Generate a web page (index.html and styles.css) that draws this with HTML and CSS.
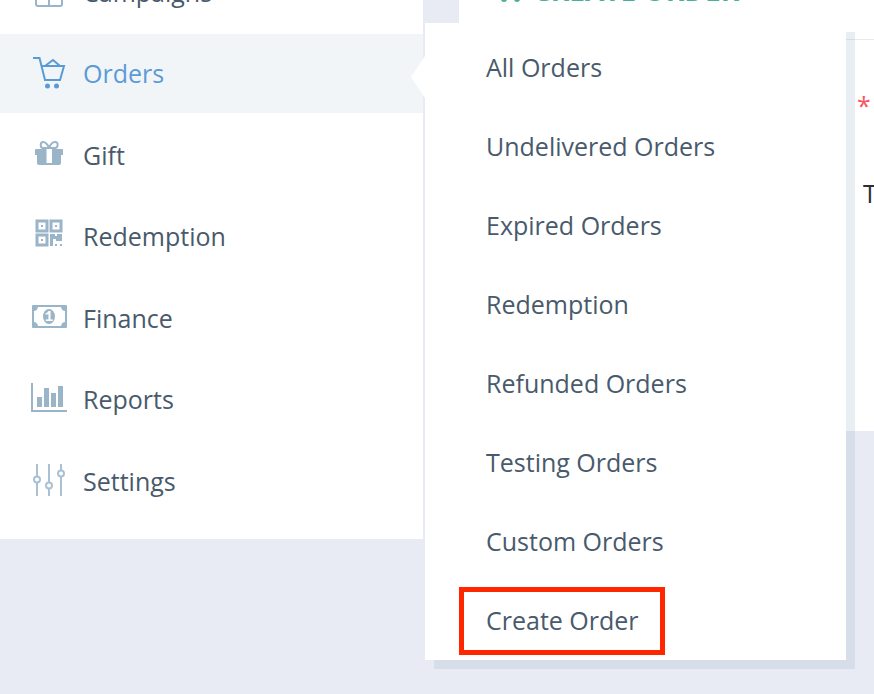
FILE: index.html
```html
<!DOCTYPE html>
<html lang="en">
<head>
  <meta charset="UTF-8" />
  <meta name="viewport" content="width=device-width, initial-scale=1.0" />
  <title>Create Order</title>
  <link rel="stylesheet" href="styles.css">
</head>
<body>

  <nav class="sidebar">
    <ul class="menu">
      <li class="menu-item">
        <a href="#" class="menu-link">
          <svg class="icon line" viewBox="0 0 40 39"><rect x="7" y="7" width="26" height="26" rx="2" /><path d="M20 7V33M7 16H33" /></svg>
          Campaigns
        </a>
      </li>
      <li class="menu-item active">
        <a href="#" class="menu-link">
          <svg class="icon line" viewBox="0 0 40 39"><path d="M4 4H10.500L16 26H31L35 12H13M16 12L24 6L31 12" /><circle class="solid" cx="18.500" cy="32" r="2.500" /><circle class="solid" cx="27.500" cy="32" r="2.500" /></svg>
          Orders
        </a>
        <ul class="submenu">
          <li><a href="#">All Orders</a></li>
          <li><a href="#">Undelivered Orders</a></li>
          <li><a href="#">Expired Orders</a></li>
          <li><a href="#">Redemption</a></li>
          <li><a href="#">Refunded Orders</a></li>
          <li><a href="#">Testing Orders</a></li>
          <li><a href="#">Custom Orders</a></li>
          <li><a href="#" class="marked">Create Order</a></li>
        </ul>
      </li>
      <li class="menu-item">
        <a href="#" class="menu-link">
          <svg class="icon" viewBox="0 0 40 39"><path fill-rule="evenodd" d="M7 13H33Q34 13 34 14V19H32V27Q32 29 30 29H10Q8 29 8 27V19H6V14Q6 13 7 13ZM17.500 13V27H23V13Z" /><g class="line"><path d="M20 12C18 7 16 6 14 6C11 6 11 12 14 12H20M20 12C22 7 24 6 26 6C30 6 29 12 26 12H20" /></g></svg>
          Gift
        </a>
      </li>
      <li class="menu-item">
        <a href="#" class="menu-link">
          <svg class="icon" viewBox="0 0 40 39"><g class="line thick"><rect x="8" y="4" width="10" height="10" /><rect x="22" y="4" width="10" height="10" /><rect x="8" y="18" width="10" height="10" /></g><path d="M12 8h2v2h-2zM26 8h2v2h-2zM12 22h2v2h-2zM21 17H26V19H28V17H33V24H27V22H24V29H21ZM26 27h2v2h-2zM31 27h2v2h-2z" /></svg>
          Redemption
        </a>
      </li>
      <li class="menu-item">
        <a href="#" class="menu-link">
          <svg class="icon" viewBox="0 0 40 39"><path fill-rule="evenodd" d="M4 6H37Q38 6 38 7V28Q38 29 37 29H4Q3 29 3 28V7Q3 6 4 6ZM9 8Q8 12 5 12V23Q8 23 9 27H32Q33 23 36 23V12Q33 12 32 8Z" /><ellipse cx="20" cy="17.500" rx="6" ry="7.500" /><text class="note-value" x="20" y="22" text-anchor="middle">1</text></svg>
          Finance
        </a>
      </li>
      <li class="menu-item">
        <a href="#" class="menu-link">
          <svg class="icon" viewBox="0 0 40 39"><path class="line" d="M3 3V31H38" /><path d="M8 17h5v10h-5zM15 8h5v19h-5zM22 13h5v14h-5zM29 6h5v21h-5z" /></svg>
          Reports
        </a>
      </li>
      <li class="menu-item">
        <a href="#" class="menu-link">
          <svg class="icon line light" viewBox="0 0 40 39"><path d="M8 2V14M8 21V34M20 2V20M20 27V34M32 2V8M32 15V34" /><circle cx="8" cy="17.500" r="3" /><circle cx="20" cy="23.500" r="3" /><circle cx="32" cy="11.500" r="3" /></svg>
          Settings
        </a>
      </li>
    </ul>
  </nav>

  <main class="content">
    <h1 class="title">
      <svg class="title-icon" viewBox="0 0 24 24"><circle cx="7" cy="21" r="2" /><circle cx="20" cy="21" r="2" /><path d="M0 2H4L8 15H20L23 6H6" /></svg>
      CREATE ORDER
    </h1>
    <div class="form">
      <span class="required">*</span>
      <span class="field-name">T</span>
    </div>
  </main>

</body>
</html>
```

FILE: styles.css
```css
*,
*::before,
*::after {
  box-sizing: border-box;
}

body {
  display: flex;
  align-items: flex-start;
  min-height: 100vh;
  margin: 0;
  overflow: hidden;
  background: #e8ebf4;
  color: #485a6b;
  font-family: "Open Sans", sans-serif;
  font-size: 25px;
}

ul {
  margin: 0;
  padding: 0;
  list-style: none;
}

a {
  color: inherit;
  text-decoration: none;
}

/* Sidebar, scrolled down past its first entries */
.sidebar {
  flex: 0 0 423px;
  margin-top: -47px;
  padding-bottom: 18px;
  background: #fff;
}

.menu-item {
  position: relative;
  margin-bottom: 2px;
}

.menu-item:nth-child(even) {
  margin-bottom: 3px;
}

.menu-item:last-child {
  margin-bottom: 0;
}

.menu-link {
  display: flex;
  align-items: center;
  gap: 14px;
  height: 79px;
  padding: 0 0 2px 29px;
}

.active .menu-link {
  background: #f2f5f8;
  color: #5a9bd5;
}

.active .menu-link::after {
  content: "";
  position: absolute;
  top: 22px;
  right: -2px;
  z-index: 3;
  border: 21px solid transparent;
  border-right: 14px solid #fff;
  border-left: 0;
}

.icon {
  width: 40px;
  height: 39px;
  margin-top: 2px;
  color: #9ab4c8;
  fill: currentColor;
}

.icon.light {
  color: #a9c1d2;
}

.active .icon {
  color: #5a9bd5;
}

.line {
  fill: none;
  stroke: currentColor;
  stroke-width: 2;
}

.thick {
  stroke-width: 3;
}

.solid {
  fill: currentColor;
  stroke: none;
}

.note-value {
  fill: #fff;
  font: bold 14px "Liberation Mono", monospace;
}

/* Fly-out menu */
.submenu {
  position: absolute;
  top: -11px;
  left: calc(100% + 2px);
  z-index: 2;
  width: 421px;
  padding-top: 5px;
  background: #fff;
  box-shadow: 9px 9px rgba(144, 172, 196, 0.2);
}

.submenu a {
  display: flex;
  align-items: center;
  height: 79px;
  padding: 0 0 2px 61px;
}

.submenu li {
  position: relative;
}

.marked::after {
  content: "";
  position: absolute;
  top: 6px;
  bottom: 5px;
  left: 34px;
  width: 206px;
  border: 5px solid #ff2600;
}

/* Page behind the menu */
.content {
  flex: 1;
  min-width: 0;
  height: 431px;
  margin-left: 36px;
  overflow: hidden;
  background: #fff;
}

.title {
  display: flex;
  align-items: center;
  gap: 12px;
  height: 80px;
  margin: -40px 0 0;
  padding: 0 0 19px 38px;
  border-bottom: 1px solid #e7eaec;
  color: #46b09c;
  font-size: 28px;
  line-height: 36px;
  white-space: nowrap;
}

.title-icon {
  width: 24px;
  height: 24px;
  fill: none;
  stroke: currentColor;
  stroke-width: 2;
}

.form {
  display: flex;
  flex-direction: column;
  gap: 52px;
  padding: 47px 0 0 398px;
  color: #2d2f33;
  line-height: 36px;
}

.required {
  color: #f9555f;
}

.field-name {
  padding-left: 6px;
}
```
